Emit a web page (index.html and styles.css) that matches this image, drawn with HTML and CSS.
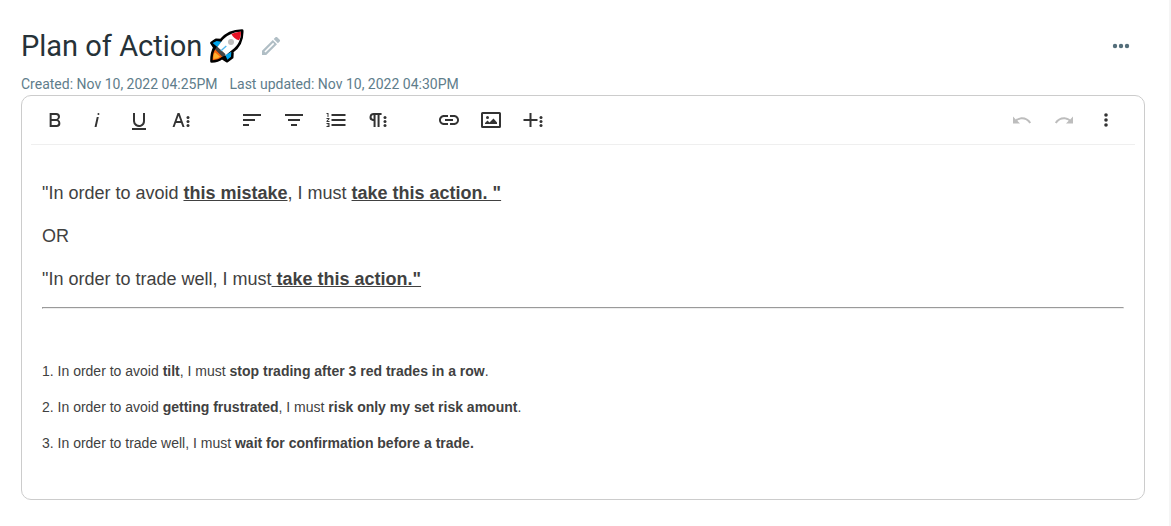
FILE: index.html
```html
<!DOCTYPE html>
<html lang="en">
<head>
<meta charset="utf-8">
<title>Plan of Action</title>
<link rel="stylesheet" href="styles.css">
</head>
<body>
<main class="page">
  <header class="header">
    <h1 class="title">Plan of Action</h1>
    <svg class="rocket" viewBox="0 0 102 102" role="img" aria-label="Rocket">
      <path d="M96 5C74 5 49 13 32 34L18 33L5 42L14 56C6 68 5 82 5 97C15 97 26 95 36 86L51 96L66 85L67 67C88 52 97 32 96 5Z" fill="#000" stroke="#000" stroke-width="9" stroke-linejoin="round"/>
      <path d="M8 42L20 36L34 38L22 54ZM64 68L63 83L52 92L46 78Z" fill="#00a6ed"/>
      <path d="M93 8C68 9 47 20 34 38L20 56L45 80L66 63C85 49 93 31 93 8Z" fill="#fff"/>
      <path d="M93 8C82 8 73 11 64 15C69 24 77 32 87 34C91 26 93 18 93 8Z" fill="#e81224"/>
      <path d="M16 60L38 82C29 90 18 93 8 94C8 80 10 69 16 60Z" fill="#f7630c"/>
      <path d="M15 70L30 83C23 88 17 89 10 90C10 82 11 75 15 70Z" fill="#ffb02e"/>
      <path d="M22 53L47 76L38 84L15 61Z" fill="#454545"/>
      <path d="M33 65L49 51" stroke="#50b8ef" stroke-width="4"/>
      <circle cx="63" cy="39" r="9" fill="#bebebe"/>
    </svg>
    <button class="plain edit" type="button" aria-label="Edit title">
      <svg viewBox="0 0 24 24"><path fill-rule="evenodd" d="M3 16.800V21h4.200L18 10.200 13.800 6zM6.500 18.600l-1.100-1.100 8.700-8.700 1.100 1.100z"/><path d="M20.700 7.500c.5-.5.5-1.200 0-1.700l-2.500-2.500c-.5-.5-1.200-.5-1.700 0L14.700 5.100l4.200 4.200z"/></svg>
    </button>
    <button class="plain more" type="button" aria-label="More options">
      <svg viewBox="0 0 24 24"><circle cx="6" cy="12" r="2.200"/><circle cx="12" cy="12" r="2.200"/><circle cx="18" cy="12" r="2.200"/></svg>
    </button>
  </header>
  <div class="meta"><span>Created: Nov 10, 2022 04:25PM</span><span>Last updated: Nov 10, 2022 04:30PM</span></div>

  <section class="editor">
    <div class="toolbar" role="toolbar" aria-label="Formatting">
      <div class="group">
        <button class="tool" type="button" aria-label="Bold"><svg viewBox="0 0 24 24"><path d="M15.250,11.8h0A3.68,3.68,0,0,0,17,9a3.93,3.93,0,0,0-3.86-4H6.65V19h7a3.74,3.74,0,0,0,3.7-3.78V15.1A3.64,3.64,0,0,0,15.250,11.8ZM8.65,7h4.2a2.09,2.09,0,0,1,2,1.3,2.09,2.09,0,0,1-1.37,2.61,2.23,2.23,0,0,1-.63.09H8.65Zm4.6,10H8.65V13h4.6a2.09,2.09,0,0,1,2,1.3,2.09,2.09,0,0,1-1.37,2.61A2.23,2.23,0,0,1,13.250,17Z"/></svg></button>
        <button class="tool" type="button" aria-label="Italic"><svg viewBox="0 0 24 24"><path d="M11.76,9h2l-2.2,10h-2Zm1.68-4a1,1,0,1,0,1,1,1,1,0,0,0-1-1Z"/></svg></button>
        <button class="tool" type="button" aria-label="Underline"><svg viewBox="0 0 24 24"><path d="M19,20v2H5V20Zm-3-6.785a4,4,0,0,1-5.74,3.4A3.75,3.75,0,0,1,8,13.085V5H6v8.210a6,6,0,0,0,8,5.44,5.851,5.851,0,0,0,4-5.65V5H16Z"/></svg></button>
        <button class="tool" type="button" aria-label="More text"><svg viewBox="0 0 24 24"><path d="M13.55,19h2l-5-14h-2l-5,14h2l1.4-4h5.1Zm-5.9-6,1.9-5.2L11.45,13Z"/><circle cx="19" cy="9.500" r="1.500"/><circle cx="19" cy="13.500" r="1.500"/><circle cx="19" cy="17.500" r="1.500"/></svg></button>
      </div>
      <div class="group">
        <button class="tool" type="button" aria-label="Align left"><svg viewBox="0 0 24 24"><path d="M3,18h6V16H3ZM3,11v2H15V11ZM3,6V8H21V6Z"/></svg></button>
        <button class="tool" type="button" aria-label="Align center"><svg viewBox="0 0 24 24"><path d="M9,18h6V16H9ZM6,11v2H18V11ZM3,6V8H21V6Z"/></svg></button>
        <button class="tool" type="button" aria-label="Ordered list"><svg viewBox="0 0 24 24"><path d="M2.500,16h2v.5h-1v1h1V18h-2v1h3V15h-3Zm1-7h1V5h-2V6h1Zm-1,2H4.3L2.500,13.1V14h3V13H3.7l1.8-2.1V10h-3Zm5-5V8h14V6Zm0,12h14V16H7.500Zm0-5h14V11H7.500Z"/></svg></button>
        <button class="tool" type="button" aria-label="More paragraph"><svg viewBox="0 0 24 24"><path d="M7.682,5a4.11,4.11,0,0,0-4.07,3.18,4,4,0,0,0,3.11,4.725l.027.005a3.766,3.766,0,0,0,.82.09v6h2V7h2V19h2V7h2V5ZM5.532,9a2,2,0,0,1,2-2v4A2,2,0,0,1,5.532,9Z"/><circle cx="19" cy="9.500" r="1.500"/><circle cx="19" cy="13.500" r="1.500"/><circle cx="19" cy="17.500" r="1.500"/></svg></button>
      </div>
      <div class="group">
        <button class="tool" type="button" aria-label="Insert link"><svg viewBox="0 0 24 24"><path d="M3.9,12c0-1.71,1.39-3.1,3.1-3.1h4V7H7c-2.76,0-5,2.24-5,5s2.24,5,5,5h4v-1.9H7C5.29,15.1,3.9,13.71,3.9,12zM8,13h8v-2H8V13zM17,7h-4v1.9h4c1.71,0,3.1,1.39,3.1,3.1s-1.39,3.1-3.1,3.1h-4V17h4c2.76,0,5-2.24,5-5S19.76,7,17,7z"/></svg></button>
        <button class="tool" type="button" aria-label="Insert image"><svg viewBox="0 0 24 24"><path fill-rule="evenodd" d="M3.500 4h17A1.500 1.500 0 0 1 22 5.500v13a1.500 1.500 0 0 1-1.500 1.500h-17A1.500 1.500 0 0 1 2 18.500v-13A1.500 1.500 0 0 1 3.500 4zM4 6v12h16V6z"/><circle cx="8.500" cy="9.500" r="1.500"/><path d="M6 16v-1l2.500-2.500 2 2 4-4L18 14.500V16z"/></svg></button>
        <button class="tool" type="button" aria-label="More rich"><svg viewBox="0 0 24 24"><path d="M16.500,13h-6v6h-2V13h-6V11h6V5h2v6h6Z"/><circle cx="20" cy="9.500" r="1.500"/><circle cx="20" cy="13.500" r="1.500"/><circle cx="20" cy="17.500" r="1.500"/></svg></button>
      </div>
      <div class="group group-end">
        <button class="tool" type="button" aria-label="Undo" disabled><svg viewBox="0 0 24 24"><path d="M10.4,9.4c-1.7,0.3-3.2,0.9-4.6,2L3,8.500v7h7l-2.7-2.7c3.7-2.6,8.8-1.8,11.5,1.9c0.2,0.2,0.3,0.5,0.5,0.7l1.8-0.9C18.9,10.7,14.6,8.7,10.4,9.4z"/></svg></button>
        <button class="tool" type="button" aria-label="Redo" disabled><svg viewBox="0 0 24 24"><path d="M13.6,9.4c1.7,0.3,3.2,0.9,4.6,2L21,8.500v7h-7l2.7-2.7C13,10.2,7.9,11,5.2,14.7c-0.2,0.2-0.3,0.5-0.5,0.7l-1.8-0.9C5.1,10.7,9.4,8.7,13.6,9.4z"/></svg></button>
        <button class="tool" type="button" aria-label="More"><svg viewBox="0 0 24 24"><circle cx="12" cy="7" r="1.800"/><circle cx="12" cy="12" r="1.800"/><circle cx="12" cy="17" r="1.800"/></svg></button>
      </div>
    </div>
    <div class="content">
      <div class="template">
        <p>"In order to avoid <u><strong>this mistake</strong></u>, I must <u><strong>take this action. "</strong></u></p>
        <p>OR</p>
        <p>"In order to trade well, I must<u><strong> take this action."</strong></u></p>
      </div>
      <hr class="rule">
      <div class="rules">
        <p>1. In order to avoid <strong>tilt</strong>, I must <strong>stop trading after 3 red trades in a row</strong>.</p>
        <p>2. In order to avoid <strong>getting frustrated</strong>, I must <strong>risk only my set risk amount</strong>.</p>
        <p>3. In order to trade well, I must <strong>wait for confirmation before a trade.</strong></p>
      </div>
    </div>
  </section>
</main>
</body>
</html>
```

FILE: styles.css
```css
* {
  box-sizing: border-box;
}

body {
  margin: 0;
  background: #fff;
  font-family: Roboto, "Liberation Sans", sans-serif;
}

p,
h1 {
  margin: 0;
}

button {
  border: 0;
  background: none;
  cursor: pointer;
}

svg {
  display: block;
}

.page {
  min-height: 100vh;
  padding: 26px 24px 26px 21px;
  border-right: 2px solid #f5f5f5;
}

.header {
  display: flex;
  align-items: center;
  height: 40px;
}

.title {
  color: #263238;
  font-size: 29px;
  font-weight: 400;
  line-height: 40px;
}

.rocket {
  width: 34px;
  height: 34px;
  margin-left: 8px;
}

.plain {
  padding: 0;
  color: #546e7a;
}

.plain svg {
  width: 24px;
  height: 24px;
  fill: currentColor;
}

.edit {
  margin-left: 15px;
  color: #b0bec5;
}

.more {
  margin-left: auto;
  margin-right: 12px;
}

.meta {
  display: flex;
  gap: 12px;
  padding-top: 8px;
  color: #607d8b;
  font-size: 14px;
  line-height: 20px;
}

.editor {
  margin-top: 1px;
  border: 1px solid #ccc;
  border-radius: 10px;
  font-family: "Liberation Sans", Arial, sans-serif;
}

.toolbar {
  display: flex;
  gap: 29px;
  margin: 0 9px;
  padding: 3px 8px 3px 3px;
  border-bottom: 1px solid #efefef;
}

.group {
  display: flex;
}

.group-end {
  margin-left: auto;
}

.tool {
  padding: 9px;
  color: #333;
}

.tool:disabled {
  color: #bdbdbd;
  cursor: default;
}

.tool svg {
  width: 24px;
  height: 24px;
  fill: currentColor;
}

.content {
  padding: 36px 20px 46px;
  color: #414141;
}

.template {
  display: grid;
  gap: 18px;
  font-size: 18px;
  line-height: 25px;
}

.rule {
  margin: 15px 0 52px;
}

.rules {
  display: grid;
  gap: 16px;
  font-size: 14px;
  line-height: 20px;
}
```
